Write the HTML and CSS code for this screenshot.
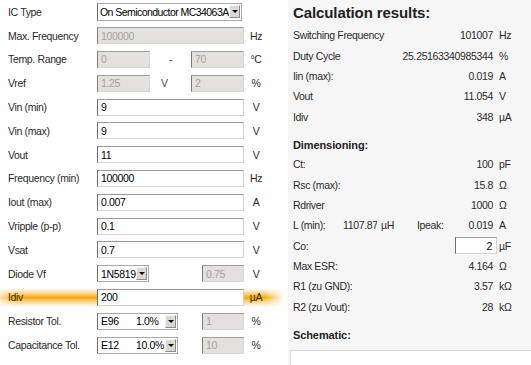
FILE: index.html
```html
<!DOCTYPE html>
<html lang="en">
<head>
    <meta charset="UTF-8">
    <meta name="viewport" content="width=device-width, initial-scale=1.0">
    <title>MC34063 Calculator</title>
    <link rel="stylesheet" href="styles.css">
</head>
<body>

<div class="app">
    <form class="params">
        <div class="row">
            <label>IC Type</label>
            <div class="combo ic"><span class="combo-text">On Semiconductor MC34063A</span><i class="arrow"></i></div>
        </div>
        <div class="row">
            <label>Max. Frequency</label>
            <input class="field off" value="100000" disabled>
            <span class="unit">Hz</span>
        </div>
        <div class="row">
            <label>Temp. Range</label>
            <div class="pair">
                <input class="field off half" value="0" disabled>
                <span class="mid">-</span>
                <input class="field off half" value="70" disabled>
            </div>
            <span class="unit">°C</span>
        </div>
        <div class="row">
            <label>Vref</label>
            <div class="pair">
                <input class="field off half" value="1.25" disabled>
                <span class="mid left">V</span>
                <input class="field off half" value="2" disabled>
            </div>
            <span class="unit">%</span>
        </div>
        <div class="row">
            <label>Vin (min)</label>
            <input class="field" value="9">
            <span class="unit">V</span>
        </div>
        <div class="row">
            <label>Vin (max)</label>
            <input class="field" value="9">
            <span class="unit">V</span>
        </div>
        <div class="row">
            <label>Vout</label>
            <input class="field" value="11">
            <span class="unit">V</span>
        </div>
        <div class="row">
            <label>Frequency (min)</label>
            <input class="field" value="100000">
            <span class="unit">Hz</span>
        </div>
        <div class="row">
            <label>Iout (max)</label>
            <input class="field" value="0.007">
            <span class="unit">A</span>
        </div>
        <div class="row">
            <label>Vripple (p-p)</label>
            <input class="field" value="0.1">
            <span class="unit">V</span>
        </div>
        <div class="row">
            <label>Vsat</label>
            <input class="field" value="0.7">
            <span class="unit">V</span>
        </div>
        <div class="row">
            <label>Diode Vf</label>
            <div class="pair">
                <div class="combo diode"><span class="combo-text">1N5819</span><i class="arrow"></i></div>
                <input class="field off short" value="0.75" disabled>
            </div>
            <span class="unit">V</span>
        </div>
        <div class="row active">
            <label>Idiv</label>
            <input class="field" value="200">
            <span class="unit">µA</span>
        </div>
        <div class="row">
            <label>Resistor Tol.</label>
            <div class="pair">
                <div class="combo tol"><span class="combo-text">E96</span><span class="combo-pct">1.0%</span><i class="arrow"></i></div>
                <input class="field off short" value="1" disabled>
            </div>
            <span class="unit">%</span>
        </div>
        <div class="row">
            <label>Capacitance Tol.</label>
            <div class="pair">
                <div class="combo tol"><span class="combo-text">E12</span><span class="combo-pct">10.0%</span><i class="arrow"></i></div>
                <input class="field off short" value="10" disabled>
            </div>
            <span class="unit">%</span>
        </div>
    </form>

    <section class="results">
        <h2>Calculation results:</h2>
        <div class="res-row"><span class="name">Switching Frequency</span><span class="val">101007</span><span class="u">Hz</span></div>
        <div class="res-row"><span class="name">Duty Cycle</span><span class="val">25.25163340985344</span><span class="u">%</span></div>
        <div class="res-row"><span class="name">Iin (max):</span><span class="val">0.019</span><span class="u">A</span></div>
        <div class="res-row"><span class="name">Vout</span><span class="val">11.054</span><span class="u">V</span></div>
        <div class="res-row"><span class="name">Idiv</span><span class="val">348</span><span class="u">µA</span></div>

        <h3>Dimensioning:</h3>
        <div class="res-row"><span class="name">Ct:</span><span class="val">100</span><span class="u">pF</span></div>
        <div class="res-row"><span class="name">Rsc (max):</span><span class="val">15.8</span><span class="u">Ω</span></div>
        <div class="res-row"><span class="name">Rdriver</span><span class="val">1000</span><span class="u">Ω</span></div>
        <div class="res-row">
            <span class="lname">L (min):</span>
            <span class="lval">1107.878</span>
            <span class="lunit">µH</span>
            <span class="name">Ipeak:</span>
            <span class="val">0.019</span><span class="u">A</span>
        </div>
        <div class="res-row"><span class="name">Co:</span><input class="field co" value="2"><span class="u">µF</span></div>
        <div class="res-row"><span class="name">Max ESR:</span><span class="val">4.164</span><span class="u">Ω</span></div>
        <div class="res-row"><span class="name">R1 (zu GND):</span><span class="val">3.57</span><span class="u">kΩ</span></div>
        <div class="res-row"><span class="name">R2 (zu Vout):</span><span class="val">28</span><span class="u">kΩ</span></div>

        <h3>Schematic:</h3>
        <div class="schematic"></div>
    </section>
</div>

</body>
</html>
```

FILE: styles.css
```css
body {
    margin: 0;
    font-family: "Liberation Sans", Arial, sans-serif;
    font-size: 10.5px;
    letter-spacing: -0.35px;
    color: #2a2a2a;
    background: #fff;
}
.app {
    display: flex;
    height: 365px;
    overflow: hidden;
}

/* left: input parameters */
.params {
    width: 288px;
    flex-shrink: 0;
}
.row {
    position: relative;
    display: grid;
    grid-template-columns: 89px 147px 24px;
    align-items: center;
    height: 23.8px;
    padding-left: 8px;
}
.row > * {
    position: relative;
    z-index: 1;
}
.row.active::before {
    content: "";
    position: absolute;
    left: 0;
    right: 4px;
    top: 2px;
    bottom: 2px;
    z-index: 0;
    background: linear-gradient(to bottom, rgba(245, 176, 30, 0) 0%, rgba(243, 173, 28, 0.55) 30%, #f2a912 50%, rgba(243, 173, 28, 0.55) 70%, rgba(245, 176, 30, 0) 100%);
    -webkit-mask-image: linear-gradient(to right, rgba(0,0,0,0.35) 0%, #000 5%, #000 93%, rgba(0,0,0,0) 100%);
    mask-image: linear-gradient(to right, rgba(0,0,0,0.35) 0%, #000 5%, #000 93%, rgba(0,0,0,0) 100%);
}
.row.active label,
.row.active .unit {
    color: #3a2a00;
}
.unit {
    text-align: center;
}
.field {
    box-sizing: border-box;
    width: 147px;
    height: 17px;
    margin: 0;
    padding: 0 3px;
    font: inherit;
    letter-spacing: inherit;
    color: #000;
    background: #fff;
    border: 1px solid #d4d4d4;
    border-left-color: #6e6e6e;
    border-top-color: #9a9a9a;
    outline: none;
}
.field.off {
    color: #a3a3a3;
    background: #e2e1dd;
    border-color: #d6d6d6;
    border-left-color: #7d7d7d;
    border-top-color: #9d9d9d;
}
.field.half {
    width: 53px;
}
.field.short {
    width: 42px;
}
.pair {
    display: flex;
    align-items: center;
    justify-content: space-between;
}
.mid {
    flex: 1;
    text-align: center;
    color: #444;
}
.mid.left {
    text-align: left;
    padding-left: 11px;
}

/* dropdowns */
.combo {
    box-sizing: border-box;
    display: flex;
    align-items: center;
    height: 17px;
    padding-left: 3px;
    background: #fff;
    border: 1px solid #a9a9a9;
    border-left-color: #707070;
    color: #000;
}
.combo.ic {
    width: 145px;
    height: 18px;
    padding-left: 2px;
    letter-spacing: -0.55px;
}
.combo.diode {
    width: 52px;
}
.combo.tol {
    width: 81px;
}
.combo-text {
    flex: 1;
    white-space: nowrap;
    overflow: hidden;
}
.combo-pct {
    width: 29px;
}
.arrow {
    position: relative;
    flex-shrink: 0;
    width: 11px;
    height: 13px;
    margin-right: 1px;
    background: #dcd9d2;
    border: 1px solid #f4f4f4;
    border-right-color: #8c8c8c;
    border-bottom-color: #8c8c8c;
    box-sizing: border-box;
}
.arrow::after {
    content: "";
    position: absolute;
    left: 2px;
    top: 4px;
    border-left: 3px solid transparent;
    border-right: 3px solid transparent;
    border-top: 3px solid #000;
}

/* right: results */
.results {
    flex: 1;
    padding-left: 5px;
    background: #f6f6f6;
}
.results h2 {
    margin: 0;
    height: 25px;
    line-height: 26px;
    font-size: 15px;
    letter-spacing: -0.1px;
    color: #222;
}
.results h3 {
    margin: 10px 0 0;
    height: 17px;
    line-height: 17px;
    font-size: 11px;
    letter-spacing: -0.1px;
    color: #222;
}
.res-row {
    display: flex;
    align-items: center;
    height: 20.4px;
    white-space: nowrap;
}
.name {
    flex: 1;
}
.val {
    text-align: right;
}
.u {
    width: 32px;
    margin-left: 6px;
}
.lname {
    width: 50px;
}
.lval {
    width: 34px;
    overflow: hidden;
}
.lunit {
    width: 36px;
    margin-left: 4px;
}
.field.co {
    width: 42px;
    text-align: right;
    padding-right: 4px;
    margin-right: -4px;
}
.schematic {
    height: 30px;
    margin: 6px 0 0 -3px;
    background: #fff;
    border: 1px solid #dadada;
    border-right: none;
}
```
